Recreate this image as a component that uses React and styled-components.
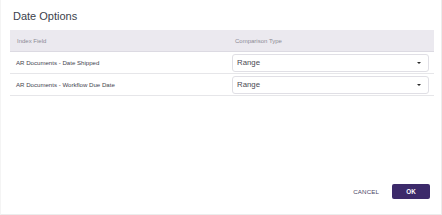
import React from "react";
import styled, { createGlobalStyle } from "styled-components";

const GlobalStyle = createGlobalStyle`
    html, body {
        margin: 0;
        padding: 0;
        background: #ffffff;
    }
    * {
        box-sizing: border-box;
    }
`;

const Dialog = styled.div`
    width: 442px;
    height: 215px;
    display: flex;
    flex-direction: column;
    background: #ffffff;
    border-right: 1px solid #ececec;
    border-bottom: 1px solid #ececec;
    border-left: 1px solid #f4f4f4;
    font-family: "Liberation Sans", Arial, sans-serif;
`;

const Title = styled.h2`
    margin: 9px 0 7px 12px;
    font-size: 11px;
    line-height: 14px;
    font-weight: 400;
    color: #3b3f4c;
`;

const Table = styled.div`
    margin: 0 7px 0 9px;
`;

const Row = styled.div`
    display: grid;
    grid-template-columns: 221px 1fr;
    height: 22px;
    align-items: center;
    background: ${(props) => (props.head ? "#ebe9ef" : "#ffffff")};
    border-bottom: 1px solid ${(props) => (props.head ? "#dcdae2" : "#e6e6e9")};
`;

const HeadCell = styled.div`
    font-size: 6px;
    color: #8b8b96;
    padding-left: ${(props) => props.pad}px;
`;

const Cell = styled.div`
    font-size: 6.1px;
    color: #45454f;
    padding-left: 6px;
`;

const SelectCell = styled.div`
    padding: 0 5px 0 1px;
`;

const Select = styled.div`
    height: 18px;
    border: 1px solid #e0dfe5;
    border-radius: 3px;
    display: flex;
    align-items: center;
    justify-content: space-between;
    padding: 0 7px 0 4px;
    font-size: 7.8px;
    color: #4a4a54;
    background: #ffffff;
`;

const Caret = styled.span`
    width: 0;
    height: 0;
    border-left: 2px solid transparent;
    border-right: 2px solid transparent;
    border-top: 2.5px solid #2a2a2a;
`;

const Footer = styled.div`
    margin-top: auto;
    display: flex;
    justify-content: flex-end;
    align-items: center;
    gap: 13px;
    padding: 0 11px 15px 0;
`;

const TextButton = styled.button`
    border: none;
    background: none;
    padding: 0;
    font-family: inherit;
    font-size: 6.2px;
    color: #4b4668;
    letter-spacing: 0.1px;
`;

const PrimaryButton = styled.button`
    width: 38px;
    height: 15px;
    border: none;
    border-radius: 2px;
    background: #3c2a6a;
    color: #ffffff;
    font-family: inherit;
    font-size: 6.3px;
    font-weight: 700;
    padding: 0;
`;

const rows = ["AR Documents - Date Shipped", "AR Documents - Workflow Due Date"];

const App = () => {
    return (
        <>
            <GlobalStyle />
            <Dialog>
                <Title>Date Options</Title>
                <Table>
                    <Row head>
                        <HeadCell pad={7}>Index Field</HeadCell>
                        <HeadCell pad={4}>Comparison Type</HeadCell>
                    </Row>
                    {rows.map((name) => (
                        <Row key={name}>
                            <Cell>{name}</Cell>
                            <SelectCell>
                                <Select>
                                    Range
                                    <Caret />
                                </Select>
                            </SelectCell>
                        </Row>
                    ))}
                </Table>
                <Footer>
                    <TextButton>CANCEL</TextButton>
                    <PrimaryButton>OK</PrimaryButton>
                </Footer>
            </Dialog>
        </>
    );
};

export default App;
